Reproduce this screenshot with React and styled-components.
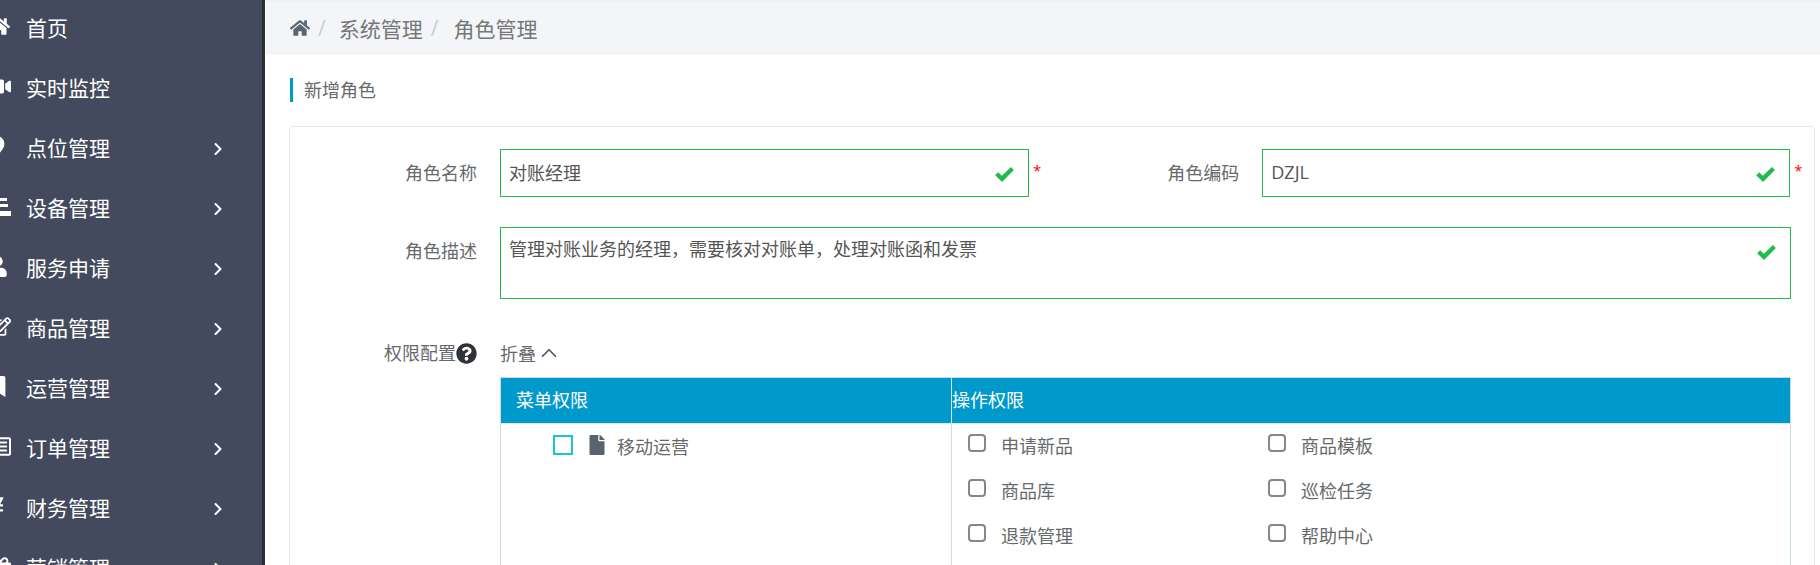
import React from 'react'
import styled, { createGlobalStyle } from 'styled-components'
import {
  FaHome, FaVideo, FaMapMarkerAlt, FaUser, FaRegEdit, FaBookmark, FaRegListAlt, FaYenSign,
  FaQuestionCircle, FaFile, FaGift,
} from 'react-icons/fa'
import { ChevronRight, ChevronUp } from 'lucide-react'

const sideBg = '#434a5d'
const blue = '#0099cc'
const green = '#22bb4c'
const textGrey = '#676a6c'
const cjk = '"Open Sans", "Noto Sans CJK SC", sans-serif'

const GlobalStyle = createGlobalStyle`
  html, body {
    margin: 0;
    height: 565px;
    overflow: hidden;
    background: #fff;
  }
  * { box-sizing: border-box; }
`

const Page = styled.div`
  display: flex;
  width: 1820px;
  height: 565px;
  overflow: hidden;
  font-family: ${cjk};
  color: ${textGrey};
`

const Sidebar = styled.nav`
  flex: 0 0 265px;
  height: 565px;
  margin-right: 1px;
  background: ${sideBg};
  border-right: 3px solid #2b2e33;
  overflow: hidden;
`

const NavList = styled.div`
  margin-top: -1px;
`

const NavItem = styled.div`
  display: flex;
  align-items: center;
  height: 60px;
  color: #fff;
  font-size: 21px;
`

// the menu is scrolled sideways in the shot, so the icons get cut at the left edge
const NavIcon = styled.span`
  display: flex;
  justify-content: flex-end;
  align-items: center;
  flex: 0 0 26px;
  min-width: 0;
  padding-right: ${p => p.$pad}px;
  font-size: 21px;
  margin-top: -5px;
  svg { flex: none; }
`

const NavText = styled.span`
  flex: 0 0 189px;
  line-height: 1;
  margin-top: -2px;
`

const NavArrow = styled(ChevronRight)`
  flex: none;
  margin-left: -7px;
`

const Main = styled.main`
  flex: 1;
  min-width: 0;
`

const Breadcrumb = styled.div`
  display: flex;
  align-items: center;
  height: 54px;
  padding-left: 24px;
  background: #f3f5f9;
  border-top: 2px solid #eff0f2;
  border-bottom: 1px solid #eceef1;
  font-size: 21px;
  color: #777;
`

const HomeIcon = styled(FaHome)`
  font-size: 20px;
  color: #5b6670;
`

const Slash = styled.span`
  margin: 0 ${p => p.$r}px 0 8px;
  color: #ccc;
  font-size: 21px;
`

const Title = styled.div`
  margin: 24px 0 24px 24px;
  padding-left: 11px;
  height: 24px;
  line-height: 24px;
  border-left: 3px solid ${blue};
  font-size: 18px;
`

const Panel = styled.section`
  width: 1526px;
  margin-left: 23px;
  height: 500px;
  padding-top: 22px;
  border: 1px solid #e2e6e8;
  border-radius: 4px;
`

const Row = styled.div`
  display: flex;
  margin-bottom: ${p => p.$mb || 30}px;
`

const Label = styled.label`
  flex: 0 0 ${p => p.$w || 187}px;
  height: ${p => p.$h || 48}px;
  line-height: ${p => p.$h || 48}px;
  text-align: right;
  font-size: 18px;
  white-space: nowrap;
`

const FieldWrap = styled.div`
  position: relative;
  margin-left: 23px;
  flex: 0 0 ${p => p.$w}px;
`

const TextField = styled.input`
  display: block;
  width: 100%;
  height: 48px;
  padding: 0 40px 3px 8px;
  border: 1px solid ${green};
  background: #fff;
  color: #555;
  font: 18px ${cjk};
  outline: none;
`

const TextArea = styled.textarea`
  display: block;
  width: 100%;
  height: 72px;
  padding: 9px 40px 0 8px;
  border: 1px solid ${green};
  background: #fff;
  color: #555;
  font: 18px/24px ${cjk};
  resize: none;
  outline: none;
`

const TickMark = styled.svg`
  position: absolute;
  top: 18px;
  right: 15px;
  width: 19px;
  height: 15px;
  fill: ${green};
`

const Tick = () => (
  <TickMark viewBox="0 0 20 16">
    <path d="M0 8.8 3.2 5.6 7.2 9.2 16.8 0 20 3.2 7.4 16z" />
  </TickMark>
)

const Star = styled.span`
  flex: 0 0 6px;
  margin-left: 4px;
  line-height: 42px;
  color: #f00;
  font-size: 15px;
`

const HelpIcon = styled(FaQuestionCircle)`
  font-size: 21px;
  color: #2f3338;
  vertical-align: -4px;
`

const Toggle = styled.div`
  display: flex;
  align-items: center;
  height: 30px;
  font-size: 18px;
  svg { color: #555; }
`

const Tree = styled.div`
  margin-left: 23px;
  width: 1291px;
`

const Table = styled.div`
  display: grid;
  grid-template-columns: 450px 1fr;
  grid-template-rows: 46px 1fr;
  height: 400px;
  margin-top: 9px;
  border: 1px solid #c9dbe2;
  border-bottom: 0;
`

const HeadCell = styled.div`
  line-height: 45px;
  padding-left: ${p => p.$pad || 0}px;
  background: ${blue};
  color: #fff;
  font-size: 18px;
  border-left: ${p => (p.$divide ? '1px solid #cfe3ea' : '0')};
  border-bottom: 1px solid #dfe6ea;
`

const MenuCell = styled.div`
  display: flex;
  align-items: flex-start;
  padding: 11px 0 0 52px;
`

const TreeBox = styled.span`
  flex: 0 0 20px;
  height: 20px;
  border: 2px solid #18c4dc;
`

const FileIcon = styled(FaFile)`
  font-size: 20px;
  color: #57636e;
  margin: 0 10px 0 14px;
`

const TreeText = styled.span`
  font-size: 18px;
  line-height: 24px;
`

const OpsCell = styled.div`
  display: grid;
  grid-template-columns: 300px 1fr;
  grid-auto-rows: 45px;
  align-content: start;
  padding-top: 10px;
  border-left: 1px solid #d5dde1;
`

const OpItem = styled.div`
  display: flex;
  align-items: flex-start;
  padding-left: 16px;
  font-size: 18px;
  line-height: 24px;
`

const CheckBox = styled.span`
  flex: 0 0 18px;
  height: 18px;
  margin-right: 15px;
  border: 2px solid #868686;
  border-radius: 4px;
`

const StairIcon = () => (
  <svg width="21" height="21" viewBox="0 0 21 21" fill="currentColor">
    <rect x="8" y="2" width="9" height="3" />
    <rect x="6" y="8" width="12" height="3" />
    <rect x="0" y="15" width="21" height="5" />
  </svg>
)

const navItems = [
  { icon: <FaHome />, text: '首页', pad: 16 },
  { icon: <FaVideo />, text: '实时监控', pad: 15 },
  { icon: <FaMapMarkerAlt />, text: '点位管理', pad: 19, more: true },
  { icon: <StairIcon />, text: '设备管理', pad: 15, more: true },
  { icon: <FaUser />, text: '服务申请', pad: 18, more: true },
  { icon: <FaRegEdit />, text: '商品管理', pad: 15, more: true },
  { icon: <FaBookmark />, text: '运营管理', pad: 18, more: true },
  { icon: <FaRegListAlt />, text: '订单管理', pad: 15, more: true },
  { icon: <FaYenSign />, text: '财务管理', pad: 19, more: true },
  { icon: <FaGift />, text: '营销管理', pad: 15, more: true },
]

const ops = ['申请新品', '商品模板', '商品库', '巡检任务', '退款管理', '帮助中心']

const App = () => {
  return (
    <Page>
      <GlobalStyle />
      <Sidebar>
        <NavList>
          {navItems.map(item => (
            <NavItem key={item.text}>
              <NavIcon $pad={item.pad}>{item.icon}</NavIcon>
              <NavText>{item.text}</NavText>
              {item.more && <NavArrow size={20} strokeWidth={2.4} />}
            </NavItem>
          ))}
        </NavList>
      </Sidebar>
      <Main>
        <Breadcrumb>
          <HomeIcon />
          <Slash $r={13}>/</Slash>
          <span>系统管理</span>
          <Slash $r={15}>/</Slash>
          <span>角色管理</span>
        </Breadcrumb>
        <Title>新增角色</Title>
        <Panel>
          <Row>
            <Label>角色名称</Label>
            <FieldWrap $w={529}>
              <TextField readOnly value="对账经理" />
              <Tick />
            </FieldWrap>
            <Star>*</Star>
            <Label $w={198}>角色编码</Label>
            <FieldWrap $w={528}>
              <TextField readOnly value="DZJL" />
              <Tick />
            </FieldWrap>
            <Star>*</Star>
          </Row>
          <Row $mb={39}>
            <Label>角色描述</Label>
            <FieldWrap $w={1291}>
              <TextArea readOnly value="管理对账业务的经理，需要核对对账单，处理对账函和发票" />
              <Tick />
            </FieldWrap>
          </Row>
          <Row>
            <Label $h={30}>权限配置<HelpIcon /></Label>
            <Tree>
              <Toggle>折叠<ChevronUp size={26} strokeWidth={1.6} /></Toggle>
              <Table>
                <HeadCell $pad={15}>菜单权限</HeadCell>
                <HeadCell $divide>操作权限</HeadCell>
                <MenuCell>
                  <TreeBox />
                  <FileIcon />
                  <TreeText>移动运营</TreeText>
                </MenuCell>
                <OpsCell>
                  {ops.map(op => (
                    <OpItem key={op}>
                      <CheckBox />
                      <span>{op}</span>
                    </OpItem>
                  ))}
                </OpsCell>
              </Table>
            </Tree>
          </Row>
        </Panel>
      </Main>
    </Page>
  )
}

export default App
